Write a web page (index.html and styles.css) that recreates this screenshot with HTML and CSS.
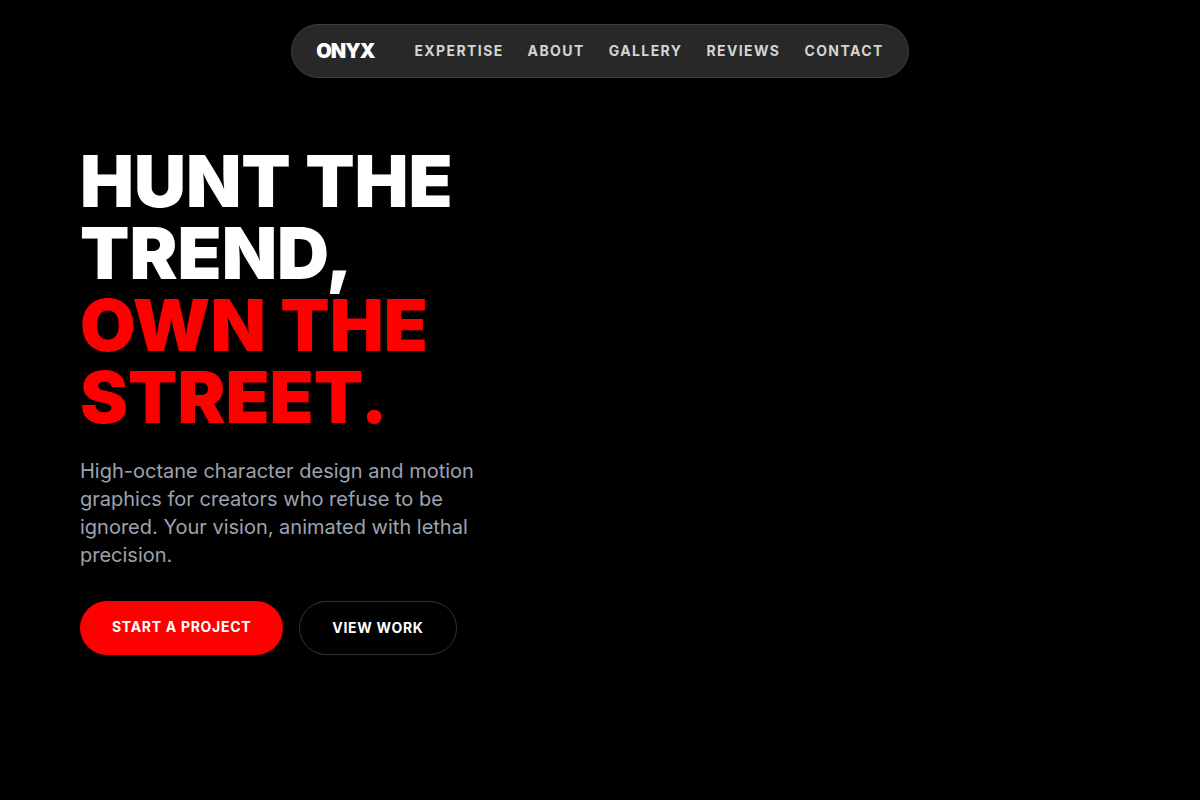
FILE: index.html
```html
<!DOCTYPE html>
<html lang="en">
<head>
    <meta charset="utf-8">
    <meta name="viewport" content="width=device-width, initial-scale=1">
    <title>ONYX</title>
    <link rel="stylesheet" href="styles.css">
</head>
<body>
<header class="site-header">
    <nav class="navbar">
        <a class="logo" href="#home">ONYX</a>
        <ul class="nav-links">
            <li><a href="#expertise">Expertise</a></li>
            <li><a href="#about">About</a></li>
            <li><a href="#gallery">Gallery</a></li>
            <li><a href="#reviews">Reviews</a></li>
            <li><a href="#contact">Contact</a></li>
        </ul>
    </nav>
</header>
<main class="hero" id="home">
    <div class="hero-content">
        <h1>Hunt the trend, <span class="accent">Own the street.</span></h1>
        <p>High-octane character design and motion graphics for creators who refuse to be ignored. Your vision, animated with lethal precision.</p>
        <div class="actions">
            <a class="btn btn-primary" href="#contact">Start a project</a>
            <a class="btn btn-outline" href="#gallery">View work</a>
        </div>
    </div>
</main>
</body>
</html>
```

FILE: styles.css
```css
* {
    box-sizing: border-box;
    margin: 0;
    padding: 0;
}

body {
    min-height: 100vh;
    background-color: #000;
    color: #fff;
    font-family: Inter, "Liberation Sans", sans-serif;
}

a {
    color: inherit;
    text-decoration: none;
}

.site-header {
    display: flex;
    justify-content: center;
    padding-top: 24px;
}

.navbar {
    display: flex;
    align-items: center;
    gap: 40px;
    padding: 14px 24px;
    border: 1px solid #3d3d3d;
    border-radius: 50px;
    background-color: #282828;
}

.logo {
    font-size: 20px;
    font-weight: 900;
    line-height: 24px;
    letter-spacing: -0.05em;
}

.nav-links {
    display: flex;
    gap: 24px;
    list-style: none;
    color: #d4d4d4;
    font-size: 14px;
    font-weight: 700;
    line-height: 24px;
    letter-spacing: 0.1em;
    text-transform: uppercase;
}

.hero {
    padding: 67px 80px;
}

.hero-content {
    max-width: 420px;
}

.hero h1 {
    font-size: 72px;
    font-weight: 900;
    line-height: 72px;
    text-transform: uppercase;
}

.accent {
    display: block;
    color: #f00;
}

.hero p {
    margin: 24px 0 32px;
    color: #9ca3af;
    font-size: 20px;
    line-height: 28px;
}

.actions {
    display: flex;
    gap: 16px;
}

.btn {
    padding: 16px 32px;
    border-radius: 50px;
    font-size: 14px;
    font-weight: 700;
    line-height: 20px;
    letter-spacing: 0.05em;
    text-transform: uppercase;
}

.btn-primary {
    background-color: #f00;
}

.btn-outline {
    border: 1px solid #333;
}
```
